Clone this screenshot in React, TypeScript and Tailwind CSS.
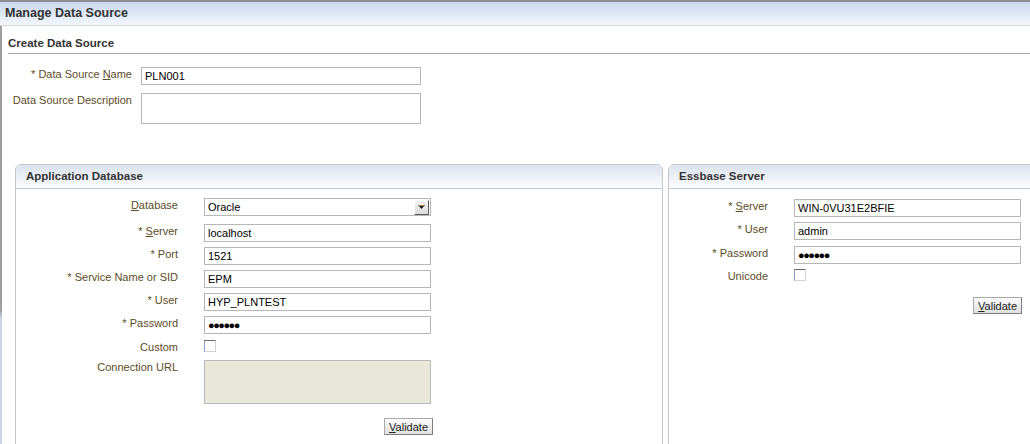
import React from "react";

const labelCls =
  "text-[11px] leading-[13px] text-[#5c4b28] text-right whitespace-nowrap";
const inputCls =
  "h-[18px] border border-[#b7b7b7] bg-white px-[3px] text-[11px] leading-[16px] text-black";

const Dots = () => (
  <span className="text-[11px] leading-[16px] tracking-[-1.5px] text-black">
    ●●●●●●
  </span>
);

const Row = ({
  label,
  width,
  gap = 26,
  children,
}: {
  label: React.ReactNode;
  width: string;
  gap?: number;
  children: React.ReactNode;
}) => (
  <div className="flex items-start">
    <div className={`${width} ${labelCls} pt-[1px]`}>{label}</div>
    <div style={{ width: gap }} />
    {children}
  </div>
);

const Checkbox = () => (
  <div className="w-[12px] h-[12px] bg-white border border-t-[#6a6a6a] border-l-[#7f9bc2] border-r-[#d2d2d2] border-b-[#d2d2d2]" />
);

const ValidateButton = () => (
  <button className="h-[17px] px-[4px] border border-[#a9a9a9] border-r-[#7d7d7d] border-b-[#7d7d7d] bg-gradient-to-b from-[#fbfbfb] to-[#e1e1e1] text-[11px] leading-[14px] text-[#222]">
    <span className="underline">V</span>alidate
  </button>
);

const Panel = ({
  title,
  width,
  children,
}: {
  title: string;
  width: string;
  children: React.ReactNode;
}) => (
  <div
    className={`${width} shrink-0 h-[300px] border border-[#c3c6ca] rounded-t-[6px] bg-white`}
  >
    <div className="h-[24px] rounded-t-[6px] border-b border-[#c3c6ca] bg-gradient-to-b from-[#dbe3ee] to-[#fbfcfe] flex items-center pl-[10px]">
      <h2 className="text-[11.5px] font-bold text-[#333]">{title}</h2>
    </div>
    {children}
  </div>
);

export default function App() {
  return (
    <div className="w-[1030px] h-[444px] overflow-hidden bg-white flex flex-col font-['Liberation_Sans',Arial,sans-serif]">
      <div className="h-[26px] shrink-0 border-t-2 border-t-[#8c8c8c] border-b border-b-[#d3dacf] bg-gradient-to-b from-[#c9d8ec] to-[#f3f7fd] flex items-center px-[5px]">
        <h1 className="text-[12.5px] font-bold text-[#333]">Manage Data Source</h1>
      </div>

      <div className="flex flex-1 min-h-0">
        <div className="w-[2px] shrink-0 bg-[linear-gradient(to_bottom,#9e9e9e_68%,#cdd6e8_70%)]" />
        <div className="flex-1 flex flex-col min-w-0">
          <div className="ml-[6px] pt-[10px] pb-[3px] border-b border-[#a6a6ae]">
            <h2 className="text-[11.5px] leading-[14px] font-bold text-[#333]">
              Create Data Source
            </h2>
          </div>

          <div className="ml-[6px] mt-[13px] flex flex-col gap-[8px]">
            <Row
              width="w-[124px]"
              gap={9}
              label={
                <>
                  * Data Source <span className="underline">N</span>ame
                </>
              }
            >
              <div className={`${inputCls} w-[280px]`}>PLN001</div>
            </Row>
            <Row width="w-[124px]" gap={9} label="Data Source Description">
              <div className="w-[280px] h-[31px] border border-[#b7b7b7] bg-white" />
            </Row>
          </div>

          <div className="flex gap-[5px] ml-[13px] mt-[40px]">
            <Panel title="Application Database" width="w-[648px]">
              <div className="pt-[9px] flex flex-col gap-[5px]">
                <Row
                  width="w-[162px]"
                  label={
                    <>
                      <span className="underline">D</span>atabase
                    </>
                  }
                >
                  <div className="w-[227px] h-[18px] border border-[#b7b7b7] bg-white flex items-center">
                    <span className="flex-1 pl-[3px] text-[11px] text-black">Oracle</span>
                    <div className="w-[15px] h-[15px] mr-[1px] bg-gradient-to-b from-[#f4f4f4] to-[#dadada] border border-t-white border-l-white border-r-[#5e5e5e] border-b-[#5e5e5e] flex items-center justify-center">
                      <svg width="9" height="6" viewBox="0 0 9 6">
                        <polygon points="1,1 8,1 4.5,5" fill="#1a1a2a" />
                        <rect x="2" y="1" width="5" height="1" fill="#c08a2a" />
                      </svg>
                    </div>
                  </div>
                </Row>
                <div className="mt-[3px]">
                  <Row
                    width="w-[162px]"
                    label={
                      <>
                        * <span className="underline">S</span>erver
                      </>
                    }
                  >
                    <div className={`${inputCls} w-[227px]`}>localhost</div>
                  </Row>
                </div>
                <Row width="w-[162px]" label="* Port">
                  <div className={`${inputCls} w-[227px]`}>1521</div>
                </Row>
                <Row width="w-[162px]" label="* Service Name or SID">
                  <div className={`${inputCls} w-[227px]`}>EPM</div>
                </Row>
                <Row width="w-[162px]" label="* User">
                  <div className={`${inputCls} w-[227px]`}>HYP_PLNTEST</div>
                </Row>
                <Row width="w-[162px]" label="* Password">
                  <div className={`${inputCls} w-[227px]`}>
                    <Dots />
                  </div>
                </Row>
                <div className="mt-[1px]">
                  <Row width="w-[162px]" label="Custom">
                    <Checkbox />
                  </Row>
                </div>
                <div className="mt-[1px]">
                  <Row width="w-[162px]" label="Connection URL">
                    <div className="w-[227px] h-[44px] border border-[#b9b9b9] bg-[#e9e8d8]" />
                  </Row>
                </div>
                <div className="flex mt-[9px]">
                  <div className="w-[188px]" />
                  <div className="w-[229px] flex justify-end">
                    <ValidateButton />
                  </div>
                </div>
              </div>
            </Panel>

            <Panel title="Essbase Server" width="w-[400px]">
              <div className="pt-[10px] flex flex-col gap-[5px]">
                <Row
                  width="w-[99px]"
                  label={
                    <>
                      * <span className="underline">S</span>erver
                    </>
                  }
                >
                  <div className={`${inputCls} w-[227px]`}>WIN-0VU31E2BFIE</div>
                </Row>
                <Row width="w-[99px]" label="* User">
                  <div className={`${inputCls} w-[227px]`}>admin</div>
                </Row>
                <div className="mt-[1px]">
                  <Row width="w-[99px]" label="* Password">
                    <div className={`${inputCls} w-[227px]`}>
                      <Dots />
                    </div>
                  </Row>
                </div>
                <Row width="w-[99px]" label="Unicode">
                  <Checkbox />
                </Row>
                <div className="flex mt-[9px]">
                  <div className="w-[125px]" />
                  <div className="w-[228px] flex justify-end">
                    <ValidateButton />
                  </div>
                </div>
              </div>
            </Panel>
          </div>
        </div>
      </div>
    </div>
  );
}
